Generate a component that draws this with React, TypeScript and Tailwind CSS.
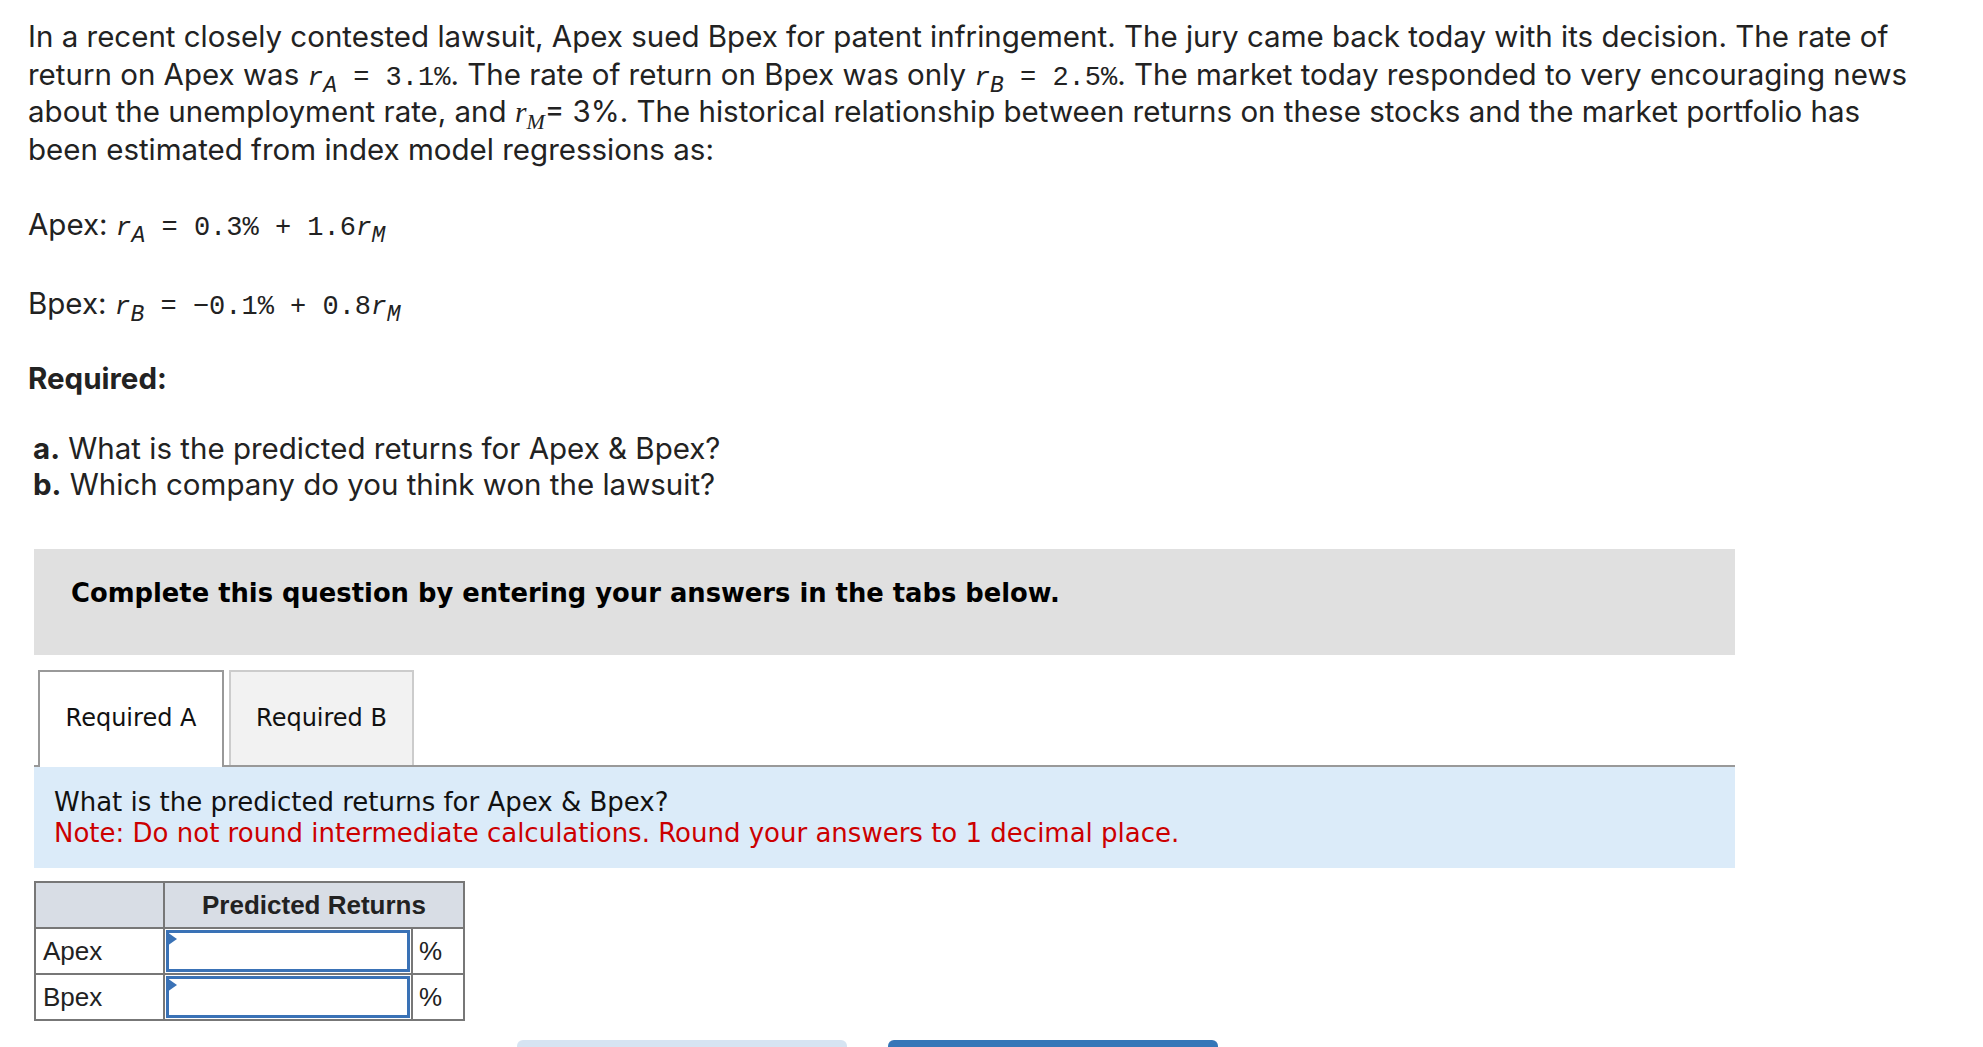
import React from "react";

const body = { fontFamily: '"Inter", "Open Sans", sans-serif' };
const mono = { fontFamily: '"Liberation Mono", monospace' };
const verdana = { fontFamily: '"DejaVu Sans", "Liberation Sans", sans-serif' };
const arial = { fontFamily: '"Liberation Sans", Arial, sans-serif' };

// italic monospace variable with a subscript, e.g. rA
function R({ sub }: { sub: string }) {
  return (
    <>
      <span style={mono} className="text-[26px] italic leading-none">
        r
      </span>
      <span
        style={mono}
        className="relative top-[7px] text-[23px] italic leading-none"
      >
        {sub}
      </span>
    </>
  );
}

function Mono({ children }: { children: React.ReactNode }) {
  return (
    <span style={mono} className="whitespace-pre text-[27px] leading-none">
      {children}
    </span>
  );
}

function AnswerRow({ label }: { label: string }) {
  return (
    <tr className="h-[46px]">
      <td className="border-2 border-[#777] px-[7px] text-[26px] leading-none text-[#222]">
        {label}
      </td>
      <td className="border-2 border-[#777] p-0">
        <div className="relative mx-[1px] h-[42px] border-[3px] border-[#3a72b6] bg-white">
          <svg
            className="absolute left-[-2px] top-[-1px]"
            width="10"
            height="14"
            viewBox="0 0 10 14"
          >
            <polygon points="0,0 10,7 0,14" fill="#3a72b6" />
          </svg>
        </div>
      </td>
      <td className="border-2 border-[#777] px-[6px] text-[26px] leading-none text-[#222]">
        %
      </td>
    </tr>
  );
}

export default function App() {
  return (
    <div className="min-h-screen bg-white pl-[28px] pt-[18px] text-[#222]">
      {/* Question text */}
      <div style={body} className="text-[29.5px] leading-[37.5px]">
        <div className="whitespace-nowrap">
          <p>
            In a recent closely contested lawsuit, Apex sued Bpex for patent
            infringement. The jury came back today with its decision. The rate
            of
          </p>
          <p>
            return on Apex was <R sub="A" />
            <Mono>{" = 3.1%"}</Mono>. The rate of return on Bpex was only{" "}
            <R sub="B" />
            <Mono>{" = 2.5%"}</Mono>. The market today responded to very
            encouraging news
          </p>
          <p>
            about the unemployment rate, and{" "}
            <span
              className="italic leading-none"
              style={{ fontFamily: '"Liberation Serif", serif' }}
            >
              r
            </span>
            <span
              className="relative top-[7px] text-[22px] italic leading-none"
              style={{ fontFamily: '"Liberation Serif", serif' }}
            >
              M
            </span>
            = 3%. The historical relationship between returns on these stocks
            and the market portfolio has
          </p>
          <p>been estimated from index model regressions as:</p>
        </div>

        {/* Equations */}
        <p className="mt-[38px]">
          Apex: <R sub="A" />
          <Mono>{" = 0.3% + 1.6"}</Mono>
          <R sub="M" />
        </p>
        <p className="mt-[41px]">
          Bpex: <R sub="B" />
          <Mono>{" = −0.1% + 0.8"}</Mono>
          <R sub="M" />
        </p>

        <p className="mt-[38px] font-bold">Required:</p>

        <div className="mt-[32px] pl-[5px] leading-[36px]">
          <p>
            <span className="font-bold">a.</span> What is the predicted returns
            for Apex &amp; Bpex?
          </p>
          <p>
            <span className="font-bold">b.</span> Which company do you think won
            the lawsuit?
          </p>
        </div>
      </div>

      {/* Answer area */}
      <div className="ml-[6px] mt-[47px] w-[1701px]">
        <div
          style={verdana}
          className="h-[106px] bg-[#e0e0e0] pl-[37px] pt-[29px] text-[25.8px] font-bold leading-[30px] text-black"
        >
          Complete this question by entering your answers in the tabs below.
        </div>

        {/* Tabs */}
        <div
          style={verdana}
          className="mt-[15px] flex items-start gap-[5px] pl-[4px] text-[24px]"
        >
          <div className="relative z-10 mb-[-2px] flex h-[97px] w-[186px] items-center justify-center border-2 border-b-0 border-[#999] bg-white pb-[2px] text-[#111]">
            Required A
          </div>
          <div className="flex h-[95px] w-[185px] items-center justify-center border-2 border-b-0 border-[#ccc] bg-[#f2f2f2] text-[#111]">
            Required B
          </div>
        </div>
        <div className="h-[2px] bg-[#999]" />

        <div
          style={verdana}
          className="h-[101px] bg-[#dbebf9] pl-[20px] pt-[20px] text-[26px] leading-[31px]"
        >
          <p className="text-[#111]">
            What is the predicted returns for Apex &amp; Bpex?
          </p>
          <p className="text-[#c00]">
            Note: Do not round intermediate calculations. Round your answers to
            1 decimal place.
          </p>
        </div>

        {/* Table */}
        <table style={arial} className="mt-[13px] border-collapse">
          <colgroup>
            <col className="w-[129px]" />
            <col className="w-[248px]" />
            <col className="w-[52px]" />
          </colgroup>
          <thead>
            <tr className="h-[46px] bg-[#d8dde5]">
              <th className="border-2 border-[#777]" />
              <th
                colSpan={2}
                className="border-2 border-[#777] text-center text-[26px] font-bold leading-none text-[#222]"
              >
                Predicted Returns
              </th>
            </tr>
          </thead>
          <tbody>
            <AnswerRow label="Apex" />
            <AnswerRow label="Bpex" />
          </tbody>
        </table>

        {/* Buttons */}
        <div className="mt-[19px] flex gap-[41px] pl-[483px]">
          <div className="h-[48px] w-[330px] rounded-[6px] bg-[#d6e4f2]" />
          <div className="h-[48px] w-[330px] rounded-[6px] bg-[#3577b8]" />
        </div>
      </div>
    </div>
  );
}
